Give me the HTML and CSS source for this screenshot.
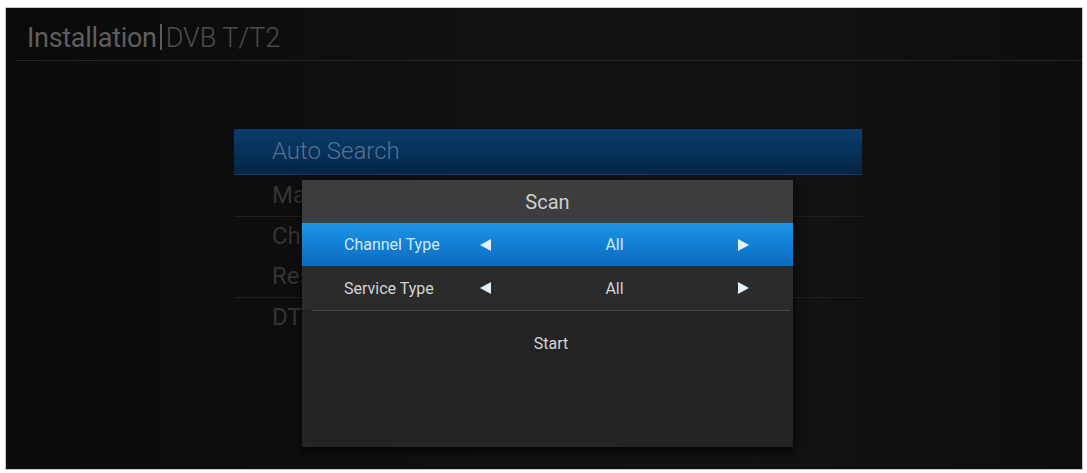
FILE: index.html
```html
<!DOCTYPE html>
<html lang="en">
<head>
    <meta charset="UTF-8">
    <title>Installation - DVB T/T2</title>
    <link rel="stylesheet" href="styles.css">
</head>
<body>
    <div class="screen">
        <div class="header">
            <span class="title-main">Installation</span><span class="title-bar"></span><span class="title-sub">DVB T/T2</span>
        </div>

        <ul class="menu">
            <li class="menu-item active">Auto Search</li>
            <li class="menu-item line">Manual Search</li>
            <li class="menu-item">Channel Edit</li>
            <li class="menu-item line">Reset</li>
            <li class="menu-item">DTV Setting</li>
        </ul>

        <div class="dialog">
            <div class="dialog-title">Scan</div>
            <div class="option focused">
                <span class="option-label">Channel Type</span>
                <span class="arrow left"></span>
                <span class="option-value">All</span>
                <span class="arrow right"></span>
            </div>
            <div class="option">
                <span class="option-label">Service Type</span>
                <span class="arrow left"></span>
                <span class="option-value">All</span>
                <span class="arrow right"></span>
            </div>
            <div class="dialog-body">
                <div class="start">Start</div>
            </div>
        </div>
    </div>
</body>
</html>
```

FILE: styles.css
```css
body {
    margin: 0;
    background: #ffffff;
    font-family: Roboto, 'Liberation Sans', sans-serif;
}

.screen {
    position: relative;
    margin: 7px 0 0 5px;
    width: 1078px;
    height: 463px;
    box-sizing: border-box;
    border: 1px solid #c8c8c8;
    background: linear-gradient(90deg, #0a0a0a 0%, #111111 45%, #121212 70%, #0d0d0d 100%);
    overflow: hidden;
}

.header {
    display: flex;
    align-items: flex-end;
    height: 53px;
    box-sizing: border-box;
    padding: 0 0 7px 12px;
    margin-left: 9px;
    border-bottom: 1px solid #262626;
    color: #5e5e5e;
}

.title-main {
    font-size: 27px;
    line-height: 30px;
    letter-spacing: -0.3px;
}

.title-bar {
    width: 2px;
    height: 26px;
    margin: 0 4px 3px 3px;
    background: #5e5e5e;
}

.title-sub {
    font-size: 27px;
    line-height: 30px;
    font-weight: 300;
    color: #4c4c4c;
}

.menu {
    list-style: none;
    margin: 68px 0 0 228px;
    padding: 0;
    width: 628px;
}

.menu-item {
    height: 38px;
    line-height: 38px;
    padding-left: 38px;
    font-size: 24px;
    color: #343434;
    border-bottom: 1px solid transparent;
}

.menu-item.active {
    height: 45px;
    line-height: 45px;
    font-weight: 300;
    color: #587090;
    background: linear-gradient(180deg, #0b3d6c 0%, #063058 55%, #042444 100%);
}

.menu-item.line {
    height: 41px;
    line-height: 41px;
    border-bottom-color: #1f1f1f;
}

.dialog {
    position: absolute;
    left: 296px;
    top: 172px;
    width: 491px;
    height: 267px;
    display: flex;
    flex-direction: column;
    background: #232323;
    box-shadow: 0 5px 10px rgba(0, 0, 0, 0.75);
}

.dialog-title {
    height: 43px;
    line-height: 44px;
    text-align: center;
    font-size: 20px;
    color: #cfcfcf;
    background: #3d3d3d;
}

.option {
    display: flex;
    align-items: center;
    height: 44px;
    padding-left: 42px;
    font-size: 16px;
    color: #d4d4d4;
    background: #2b2b2b;
}

.option.focused {
    height: 43px;
    color: #d2e8fb;
    background: linear-gradient(180deg, #1f94e6 0%, #1280d4 50%, #0b6bbd 100%);
}

.option-label {
    width: 136px;
}

.option-value {
    width: 247px;
    text-align: center;
}

.arrow {
    width: 0;
    height: 0;
    border-top: 6px solid transparent;
    border-bottom: 6px solid transparent;
}

.arrow.left {
    border-right: 11px solid #e6f0f8;
}

.arrow.right {
    border-left: 11px solid #e6f0f8;
}

.dialog-body {
    flex: 1;
    margin: 0 3px 0 10px;
    border-top: 1px solid #4a4a4a;
}

.start {
    margin-top: 23px;
    text-align: center;
    font-size: 16px;
    color: #d4d4d4;
}
```
